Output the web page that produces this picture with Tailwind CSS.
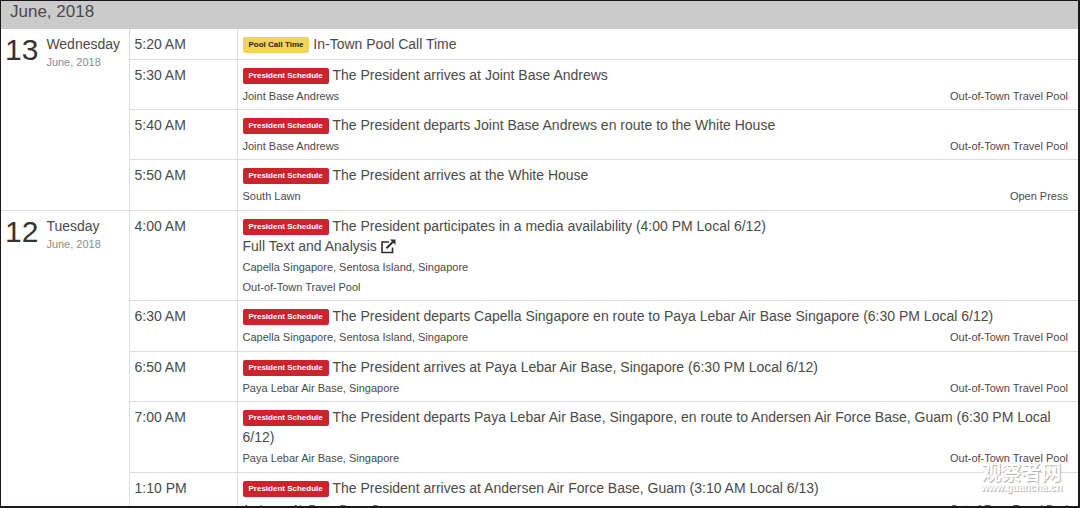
<!DOCTYPE html>
<html lang="en">
<head>
  <meta charset="UTF-8" />
  <meta name="viewport" content="width=device-width, initial-scale=1.0"/>
  <title>President's Public Schedule</title>
  <script src="https://cdn.jsdelivr.net/npm/@tailwindcss/browser@4"></script>
</head>
<body class="h-screen overflow-hidden bg-white font-['Liberation_Sans',sans-serif] text-[#4a4a4a]">
  <div class="relative h-full overflow-hidden border border-r-2 border-b-2 border-[#1c1719]">

    <!-- Month -->
    <h1 class="h-7 bg-[#cbcbcb] pl-[9px] text-[17px] leading-[22px]">June, 2018</h1>

    <!-- Schedule -->
    <table class="w-full table-fixed border-collapse text-[14px] leading-5">
      <colgroup>
        <col class="w-32"/>
        <col class="w-[108px]"/>
        <col/>
      </colgroup>
      <tbody class="align-top">
        <tr>
          <th scope="rowgroup" rowspan="4" class="border-r border-b border-[#dcdce2] px-1 py-[5px] text-left align-top font-normal">
            <div class="flex gap-2">
              <span class="text-[30px] leading-8 text-[#333333]">13</span>
              <div>
                <div>Wednesday</div>
                <div class="text-[11px] leading-4 text-[#8c8c8c]">June, 2018</div>
              </div>
            </div>
          </th>
          <td class="border-r border-b border-[#dcdce2] p-[5px]">5:20 AM</td>
          <td class="border-b border-[#dcdce2] pt-[5px] pr-[10px] pb-1 pl-[5px]">
            <div><span class="inline-block rounded-xs bg-[#f2d35e] px-[6px] align-middle text-[8px] leading-4 font-bold text-[#2a2410]">Pool Call Time</span> In-Town Pool Call Time</div>
          </td>
        </tr>
        <tr>
          <td class="border-r border-b border-[#dcdce2] p-[5px]">5:30 AM</td>
          <td class="border-b border-[#dcdce2] pt-[5px] pr-[10px] pb-[3px] pl-[5px]">
            <div><span class="inline-block rounded-xs bg-[#cd232c] px-[6px] align-middle text-[8px] leading-4 font-bold text-white">President Schedule</span> The President arrives at Joint Base Andrews</div>
            <div class="mt-px flex justify-between text-[11px] leading-5"><span>Joint Base Andrews</span><span>Out-of-Town Travel Pool</span></div>
          </td>
        </tr>
        <tr>
          <td class="border-r border-b border-[#dcdce2] p-[5px]">5:40 AM</td>
          <td class="border-b border-[#dcdce2] pt-[5px] pr-[10px] pb-[3px] pl-[5px]">
            <div><span class="inline-block rounded-xs bg-[#cd232c] px-[6px] align-middle text-[8px] leading-4 font-bold text-white">President Schedule</span> The President departs Joint Base Andrews en route to the White House</div>
            <div class="mt-px flex justify-between text-[11px] leading-5"><span>Joint Base Andrews</span><span>Out-of-Town Travel Pool</span></div>
          </td>
        </tr>
        <tr>
          <td class="border-r border-b border-[#dcdce2] p-[5px]">5:50 AM</td>
          <td class="border-b border-[#dcdce2] pt-[5px] pr-[10px] pb-1 pl-[5px]">
            <div><span class="inline-block rounded-xs bg-[#cd232c] px-[6px] align-middle text-[8px] leading-4 font-bold text-white">President Schedule</span> The President arrives at the White House</div>
            <div class="mt-px flex justify-between text-[11px] leading-5"><span>South Lawn</span><span>Open Press</span></div>
          </td>
        </tr>
      </tbody>
      <tbody class="align-top">
        <tr>
          <th scope="rowgroup" rowspan="5" class="border-r border-b border-[#dcdce2] px-1 py-[5px] text-left align-top font-normal">
            <div class="flex gap-2">
              <span class="text-[30px] leading-8 text-[#333333]">12</span>
              <div>
                <div>Tuesday</div>
                <div class="text-[11px] leading-4 text-[#8c8c8c]">June, 2018</div>
              </div>
            </div>
          </th>
          <td class="border-r border-b border-[#dcdce2] p-[5px]">4:00 AM</td>
          <td class="border-b border-[#dcdce2] pt-[5px] pr-[10px] pb-[3px] pl-[5px]">
            <div><span class="inline-block rounded-xs bg-[#cd232c] px-[6px] align-middle text-[8px] leading-4 font-bold text-white">President Schedule</span> The President participates in a media availability (4:00 PM Local 6/12)</div>
            <a href="#" class="flex items-center gap-1">Full Text and Analysis
              <svg class="size-[15px] text-[#2e2e2e]" viewBox="0 0 15 15" fill="none" stroke="currentColor" stroke-width="1.6" aria-hidden="true">
                <path d="M8 3H1V13.500H11.500V8.500"/>
                <path d="M5.500 9.200L12 2.700" stroke-width="2"/>
                <path d="M9 0.500H14.500V6Z" fill="currentColor" stroke="none"/>
              </svg>
            </a>
            <div class="mt-px text-[11px] leading-5">Capella Singapore, Sentosa Island, Singapore</div>
            <div class="text-[11px] leading-5">Out-of-Town Travel Pool</div>
          </td>
        </tr>
        <tr>
          <td class="border-r border-b border-[#dcdce2] p-[5px]">6:30 AM</td>
          <td class="border-b border-[#dcdce2] pt-[5px] pr-[10px] pb-1 pl-[5px]">
            <div><span class="inline-block rounded-xs bg-[#cd232c] px-[6px] align-middle text-[8px] leading-4 font-bold text-white">President Schedule</span> The President departs Capella Singapore en route to Paya Lebar Air Base Singapore (6:30 PM Local 6/12)</div>
            <div class="mt-px flex justify-between text-[11px] leading-5"><span>Capella Singapore, Sentosa Island, Singapore</span><span>Out-of-Town Travel Pool</span></div>
          </td>
        </tr>
        <tr>
          <td class="border-r border-b border-[#dcdce2] p-[5px]">6:50 AM</td>
          <td class="border-b border-[#dcdce2] pt-[5px] pr-[10px] pb-[3px] pl-[5px]">
            <div><span class="inline-block rounded-xs bg-[#cd232c] px-[6px] align-middle text-[8px] leading-4 font-bold text-white">President Schedule</span> The President arrives at Paya Lebar Air Base, Singapore (6:30 PM Local 6/12)</div>
            <div class="mt-px flex justify-between text-[11px] leading-5"><span>Paya Lebar Air Base, Singapore</span><span>Out-of-Town Travel Pool</span></div>
          </td>
        </tr>
        <tr>
          <td class="border-r border-b border-[#dcdce2] p-[5px]">7:00 AM</td>
          <td class="border-b border-[#dcdce2] pt-[5px] pr-[10px] pb-1 pl-[5px]">
            <div><span class="inline-block rounded-xs bg-[#cd232c] px-[6px] align-middle text-[8px] leading-4 font-bold text-white">President Schedule</span> The President departs Paya Lebar Air Base, Singapore, en route to Andersen Air Force Base, Guam (6:30 PM Local 6/12)</div>
            <div class="mt-px flex justify-between text-[11px] leading-5"><span>Paya Lebar Air Base, Singapore</span><span>Out-of-Town Travel Pool</span></div>
          </td>
        </tr>
        <tr>
          <td class="border-r border-b border-[#dcdce2] p-[5px]">1:10 PM</td>
          <td class="border-b border-[#dcdce2] pt-[5px] pr-[10px] pb-1 pl-[5px]">
            <div><span class="inline-block rounded-xs bg-[#cd232c] px-[6px] align-middle text-[8px] leading-4 font-bold text-white">President Schedule</span> The President arrives at Andersen Air Force Base, Guam (3:10 AM Local 6/13)</div>
            <div class="mt-px flex justify-between text-[11px] leading-5"><span>Andersen Air Force Base, Guam</span><span>Out-of-Town Travel Pool</span></div>
          </td>
        </tr>
      </tbody>
    </table>

    <!-- Watermark -->
    <div class="absolute right-4 bottom-3 text-center font-bold text-white text-shadow-[1px_1px_1px_#aaaaaa]">
      <div lang="zh" class="font-['Noto_Sans_CJK_SC',sans-serif] text-[20px] leading-5">观察者网</div>
      <div class="text-[10px] leading-3">www.guancha.cn</div>
    </div>
  </div>
</body>
</html>
